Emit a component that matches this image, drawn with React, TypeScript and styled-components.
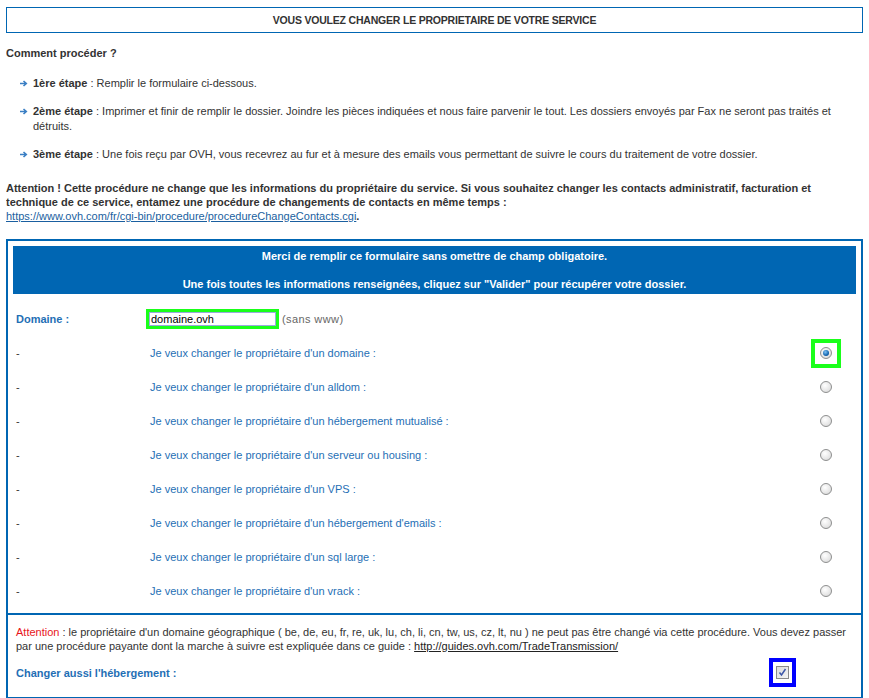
import styled, { createGlobalStyle } from 'styled-components';

const GlobalStyle = createGlobalStyle`
    body {
        margin: 6px;
        font-family: "Liberation Sans", Arial, sans-serif;
        font-size: 11px;
        color: #333;
        background: #fff;
    }
`;

const blue = '#0066b3';

// title box
const TitleBox = styled.div`
    margin-top: 1px;
    height: 24px;
    border: 1px solid ${blue};
    display: flex;
    align-items: center;
    justify-content: center;
    font-size: 10.5px;
    font-weight: bold;
    letter-spacing: -0.2px;
    text-transform: uppercase;
    color: #333;
`;

const Heading = styled.div`
    margin-top: 13px;
    font-weight: bold;
    line-height: 14px;
`;

const Steps = styled.ul`
    list-style: none;
    margin: 16px 0 0;
    padding: 0 0 0 27px;
`;

const Step = styled.li`
    position: relative;
    line-height: 15px;
    margin-bottom: 13px;
    padding-right: 20px;
    &:last-child {
        margin-bottom: 0;
    }
`;

const Bullet = styled.svg`
    position: absolute;
    left: -13px;
    top: 4px;
`;

const Notice = styled.p`
    margin: 19px 0 0;
    font-weight: bold;
    line-height: 14px;
    color: #333;
    a {
        font-weight: normal;
        color: #1a5fa0;
    }
`;

// form box
const FormBox = styled.div`
    margin-top: 16px;
    border: 2px solid ${blue};
`;

const FormHeader = styled.div`
    margin: 5px 5px 0;
    background: ${blue};
    color: #fff;
    font-weight: bold;
    text-align: center;
    line-height: 14px;
    padding: 3px 0;
`;

const Rows = styled.div`
    display: grid;
    grid-template-columns: 130px 1fr 54px;
    grid-auto-rows: 34px;
    padding: 8px 8px 5px;
    align-items: center;
`;

const Label = styled.span<{ $strong?: boolean }>`
    font-weight: ${(p) => (p.$strong ? 'bold' : 'normal')};
    color: ${(p) => (p.$strong ? '#1f6fb5' : '#333')};
`;

const OptionText = styled.span`
    padding-left: 4px;
    color: #1f6fb5;
`;

const DomainCell = styled.div`
    display: flex;
    align-items: center;
    grid-column: 2 / 4;
`;

const DomainInput = styled.div`
    width: 125px;
    height: 14px;
    border: 3px solid #1aff1a;
    padding: 0 0 0 2px;
    line-height: 14px;
    color: #000;
    background: #fff;
    box-shadow: inset 0 0 0 1px #9ad;
`;

const Hint = styled.span`
    margin-left: 3px;
    color: #666;
    letter-spacing: 0.4px;
`;

const RadioCell = styled.div`
    display: flex;
    justify-content: center;
    align-items: center;
`;

const Highlight = styled.div<{ $color: string; $w: number; $h: number; $bw: number }>`
    box-sizing: border-box;
    width: ${(p) => p.$w}px;
    height: ${(p) => p.$h}px;
    border: ${(p) => p.$bw}px solid ${(p) => p.$color};
    display: flex;
    align-items: center;
    justify-content: center;
    background: #fff;
`;

const Radio = styled.span<{ $checked?: boolean }>`
    box-sizing: border-box;
    width: 12px;
    height: 12px;
    border-radius: 50%;
    border: 1px solid #8e8f8f;
    background: radial-gradient(circle at 40% 35%, #fff 0%, #e6e6e6 60%, #cfcfcf 100%);
    display: flex;
    align-items: center;
    justify-content: center;
    &::after {
        content: '';
        display: ${(p) => (p.$checked ? 'block' : 'none')};
        width: 6px;
        height: 6px;
        border-radius: 50%;
        background: radial-gradient(circle at 40% 35%, #7fc3f5 0%, #1466b0 60%, #0b3f78 100%);
    }
`;

const Footer = styled.div`
    border-top: 2px solid ${blue};
    padding: 10px 8px 10px;
    line-height: 14px;
    a {
        color: #222;
    }
`;

const Warn = styled.span`
    color: #e8141a;
`;

const FooterRow = styled.div`
    display: grid;
    grid-template-columns: 1fr 84px;
    align-items: center;
    margin-top: 5px;
`;

const Checkbox = styled.span`
    box-sizing: border-box;
    width: 13px;
    height: 13px;
    border: 1px solid #8a8a8a;
    background: linear-gradient(135deg, #dcdcdc, #f4f4f4);
    display: flex;
    align-items: center;
    justify-content: center;
`;

const options = [
    "Je veux changer le propriétaire d'un domaine :",
    "Je veux changer le propriétaire d'un alldom :",
    "Je veux changer le propriétaire d'un hébergement mutualisé :",
    "Je veux changer le propriétaire d'un serveur ou housing :",
    "Je veux changer le propriétaire d'un VPS :",
    "Je veux changer le propriétaire d'un hébergement d'emails :",
    "Je veux changer le propriétaire d'un sql large :",
    "Je veux changer le propriétaire d'un vrack :",
];

const Arrow = () => (
    <Bullet width="8" height="7" viewBox="0 0 8 7">
        <path d="M0 3.5h6M3.5 1l2.8 2.5L3.5 6" stroke="#3b7fc4" strokeWidth="1.6" fill="none" />
    </Bullet>
);

export default function App() {
    return (
        <>
            <GlobalStyle />
            <TitleBox>Vous voulez changer le proprietaire de votre service</TitleBox>
            <Heading>Comment procéder ?</Heading>
            <Steps>
                <Step>
                    <Arrow />
                    <b>1ère étape</b> : Remplir le formulaire ci-dessous.
                </Step>
                <Step>
                    <Arrow />
                    <b>2ème étape</b> : Imprimer et finir de remplir le dossier. Joindre les pièces indiquées et nous faire parvenir le tout. Les dossiers envoyés par Fax ne seront pas traités et détruits.
                </Step>
                <Step>
                    <Arrow />
                    <b>3ème étape</b> : Une fois reçu par OVH, vous recevrez au fur et à mesure des emails vous permettant de suivre le cours du traitement de votre dossier.
                </Step>
            </Steps>
            <Notice>
                Attention ! Cette procédure ne change que les informations du propriétaire du service. Si vous souhaitez changer les contacts administratif, facturation et technique de ce service, entamez une procédure de changements de contacts en même temps :
                <br />
                <a href="#">https://www.ovh.com/fr/cgi-bin/procedure/procedureChangeContacts.cgi</a>.
            </Notice>
            <FormBox>
                <FormHeader>
                    Merci de remplir ce formulaire sans omettre de champ obligatoire.
                    <br />
                    <br />
                    Une fois toutes les informations renseignées, cliquez sur "Valider" pour récupérer votre dossier.
                </FormHeader>
                <Rows>
                    <Label $strong>Domaine :</Label>
                    <DomainCell>
                        <DomainInput>domaine.ovh</DomainInput>
                        <Hint>(sans www)</Hint>
                    </DomainCell>
                    {options.map((text, i) => (
                        <>
                            <Label key={'l' + i}>-</Label>
                            <OptionText key={'t' + i}>{text}</OptionText>
                            <RadioCell key={'r' + i}>
                                {i === 0 ? (
                                    <Highlight $color="#1aff1a" $w={30} $h={29} $bw={4}>
                                        <Radio $checked />
                                    </Highlight>
                                ) : (
                                    <Radio />
                                )}
                            </RadioCell>
                        </>
                    ))}
                </Rows>
                <Footer>
                    <Warn>Attention</Warn> : le propriétaire d'un domaine géographique ( be, de, eu, fr, re, uk, lu, ch, li, cn, tw, us, cz, lt, nu ) ne peut pas être changé via cette procédure. Vous devez passer par une procédure payante dont la marche à suivre est expliquée dans ce guide : <a href="#">http://guides.ovh.com/TradeTransmission/</a>
                    <FooterRow>
                        <Label $strong>Changer aussi l'hébergement :</Label>
                        <Highlight $color="#0000ff" $w={27} $h={29} $bw={4}>
                            <Checkbox>
                                <svg width="9" height="9" viewBox="0 0 9 9">
                                    <path d="M1.5 4.5l2 2.5L7.5 1" stroke="#3d57a8" strokeWidth="1.5" fill="none" />
                                </svg>
                            </Checkbox>
                        </Highlight>
                    </FooterRow>
                </Footer>
            </FormBox>
        </>
    );
}
